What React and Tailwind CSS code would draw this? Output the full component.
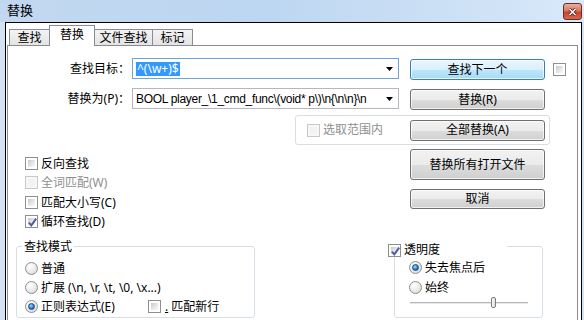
import React from "react";

function Check({ checked, disabled }) {
  return (
    <span
      className={`relative inline-flex w-[13px] h-[13px] shrink-0 border p-[2px] ${
        disabled ? "border-[#c8c8c8] bg-[#f7f7f7]" : "border-[#8e8f8f] bg-white"
      }`}
    >
      <span
        className={`block w-full h-full ${
          disabled
            ? "bg-[#f2f2f2]"
            : "bg-[linear-gradient(135deg,#c9c9c9_0%,#e6e6e6_55%,#f8f8f8_100%)]"
        }`}
      />
      {checked && (
        <svg className="absolute left-[1px] top-[1px]" width="11" height="11" viewBox="0 0 11 11">
          <path d="M1.8 5.6 L4.3 8.4 L9.2 1.6" stroke="#4a5d9c" strokeWidth="1.9" fill="none" />
        </svg>
      )}
    </span>
  );
}

function Radio({ checked }) {
  return (
    <span className="relative inline-flex w-[13px] h-[13px] shrink-0 rounded-full border border-[#8e8f8f] bg-[radial-gradient(circle_at_35%_30%,#ffffff_0%,#ececec_50%,#cfcfcf_100%)] items-center justify-center">
      {checked && (
        <span className="block w-[7px] h-[7px] rounded-full border border-[#1b4a78] bg-[radial-gradient(circle_at_40%_35%,#9fe0ff_0%,#2a8ad6_50%,#0e4a86_100%)]" />
      )}
    </span>
  );
}

function Btn({ children, className = "", primary }) {
  return (
    <div
      className={`flex items-center justify-center rounded-[3px] border text-[12px] leading-[14px] shadow-[inset_0_0_0_1px_rgba(255,255,255,0.7)] ${
        primary
          ? "border-[#3c7fb1] bg-[linear-gradient(to_bottom,#eaf6fd_0%,#d9f0fc_50%,#bee6fd_51%,#a7d9f5_100%)]"
          : "border-[#707070] bg-[linear-gradient(to_bottom,#f2f2f2_0%,#ebebeb_50%,#dddddd_51%,#cfcfcf_100%)]"
      } ${className}`}
    >
      {children}
    </div>
  );
}

function Arrow() {
  return (
    <svg width="7" height="4" viewBox="0 0 7 4" className="shrink-0">
      <path d="M0 0 H7 L3.5 4 Z" fill="#000" />
    </svg>
  );
}

function Tab({ children, selected, className = "" }) {
  if (selected) {
    return (
      <div
        className={`relative z-10 -ml-px mb-[-1px] h-[21px] bg-white border-l border-t border-r border-[#898c95] flex justify-center pt-[2px] leading-[14px] ${className}`}
      >
        {children}
      </div>
    );
  }
  return (
    <div
      className={`h-[16px] border-l border-t border-r border-[#898c95] bg-[linear-gradient(to_bottom,#f3f3f3,#e4e4e4)] flex items-center justify-center pt-[1px] leading-[14px] ${className}`}
    >
      {children}
    </div>
  );
}

export default function App() {
  return (
    <div className="w-[584px] h-[320px] overflow-hidden flex flex-col bg-[#d3e3f3] text-[12px] text-black font-['Noto_Sans','Noto_Sans_CJK_SC',sans-serif]">
      {/* title bar */}
      <div className="h-[22px] shrink-0 flex items-center justify-between pl-[7px] pr-[2px] bg-[linear-gradient(90deg,#c2d8f0_0%,#bdd6f1_45%,#c9def4_70%,#d8e9fa_100%)]">
        <span className="text-[13px] leading-[14px] -mt-[2px]">替换</span>
        <div className="w-[19px] h-[17px] mt-px flex items-center justify-center rounded-[3px] border border-[#6f2a22] bg-[linear-gradient(to_bottom,#eab0a2_0%,#d9775f_45%,#c6452c_55%,#d4684c_100%)]">
          <svg width="9" height="8" viewBox="0 0 9 8">
            <path d="M1.5 1 L7.5 7 M7.5 1 L1.5 7" stroke="#4a1a14" strokeWidth="3" />
            <path d="M1.5 1 L7.5 7 M7.5 1 L1.5 7" stroke="#ffffff" strokeWidth="1.5" />
          </svg>
        </div>
      </div>

      {/* frame */}
      <div className="flex-1 min-h-0 flex pl-[5px] pr-[2px]">
        <div className="flex-1 min-w-0 flex flex-col border-l border-t border-r border-black bg-white">
          {/* tabs */}
          <div className="h-[22px] shrink-0 flex items-end pl-[3px]">
            <Tab className="w-[41px]">查找</Tab>
            <Tab selected className="w-[46px]">替换</Tab>
            <Tab className="-ml-px w-[59px]">文件查找</Tab>
            <Tab className="-ml-px w-[41px]">标记</Tab>
          </div>

          {/* panel */}
          <div className="flex-1 min-h-0 ml-px mr-[3px] border-l border-t border-r border-[#898c95] flex flex-col">
            {/* row 1 */}
            <div className="flex items-start mt-[12px]">
              <div className="w-[124px] h-[21px] flex items-center justify-end pr-[2px] leading-[14px]">
                查找目标：
              </div>
              <div className="w-[267px] h-[21px] border border-[#6aa4dc] bg-white flex items-center pl-[3px] pr-[5px]">
                <span className="bg-[#3399ff] text-white leading-[14px] px-px whitespace-pre">^(\w+)$</span>
                <span className="flex-1" />
                <Arrow />
              </div>
              <Btn primary className="ml-[11px] mt-px w-[135px] h-[21px]">
                查找下一个
              </Btn>
              <span className="ml-[8px] mt-[5px] inline-flex">
                <Check />
              </span>
            </div>

            {/* row 2 */}
            <div className="flex items-start mt-[8px]">
              <div className="w-[124px] h-[21px] flex items-center justify-end pr-[2px] leading-[14px]">
                替换为(P)：
              </div>
              <div className="w-[267px] h-[21px] border border-[#b4b7bf] bg-white flex items-center pl-[3px] pr-[5px]">
                <span className="leading-[14px] whitespace-pre tracking-[-0.3px] font-['Liberation_Sans','Noto_Sans',sans-serif]">
                  {"BOOL player_\\1_cmd_func\\(void* p\\)\\n{\\n\\n}\\n"}
                </span>
                <span className="flex-1" />
                <Arrow />
              </div>
              <Btn className="ml-[11px] mt-px w-[135px] h-[21px]">替换(R)</Btn>
            </div>

            {/* row 3 : selection group */}
            <div className="flex mt-[5px]">
              <div className="ml-[287px] w-[255px] h-[30px] rounded-[3px] border border-[#d5dfe5] flex items-center pl-[11px]">
                <div className="w-[103px] flex items-center">
                  <Check disabled />
                  <span className="ml-[3px] leading-[14px] text-[#8f8f8f]">选取范围内</span>
                </div>
                <Btn className="w-[135px] h-[21px]">全部替换(A)</Btn>
              </div>
            </div>

            {/* section 4 */}
            <div className="flex h-[101px] shrink-0">
              <div className="w-[402px] pl-[17px] flex flex-col">
                <div className="mt-[12px] h-[13px] flex items-center">
                  <Check />
                  <span className="ml-[3px] leading-[14px]">反向查找</span>
                </div>
                <div className="mt-[6px] h-[13px] flex items-center">
                  <Check disabled />
                  <span className="ml-[3px] leading-[14px] text-[#8f8f8f]">全词匹配(W)</span>
                </div>
                <div className="mt-[7px] h-[13px] flex items-center">
                  <Check />
                  <span className="ml-[3px] leading-[14px]">匹配大小写(C)</span>
                </div>
                <div className="mt-[6px] h-[13px] flex items-center">
                  <Check checked />
                  <span className="ml-[3px] leading-[14px]">循环查找(D)</span>
                </div>
              </div>
              <div className="flex flex-col">
                <Btn className="mt-[4px] w-[135px] h-[31px]">替换所有打开文件</Btn>
                <Btn className="mt-[9px] w-[135px] h-[20px]">取消</Btn>
              </div>
            </div>

            {/* section 5 */}
            <div className="flex shrink-0">
              {/* search mode */}
              <div className="relative ml-[8px] w-[239px] h-[72px] rounded-[3px] border border-[#d5dfe5] flex flex-col pl-[8px] pt-[15px]">
                <span className="absolute left-[5px] top-[-7px] px-[2px] bg-white leading-[14px]">查找模式</span>
                <div className="h-[13px] flex items-center">
                  <Radio />
                  <span className="ml-[3px] leading-[14px]">普通</span>
                </div>
                <div className="mt-[6px] h-[13px] flex items-center">
                  <Radio />
                  <span className="ml-[3px] leading-[14px] whitespace-pre">扩展 (\n, \r, \t, \0, \x...)</span>
                </div>
                <div className="mt-[6px] h-[13px] flex items-center">
                  <div className="w-[123px] flex items-center">
                    <Radio checked />
                    <span className="ml-[3px] leading-[14px]">正则表达式(E)</span>
                  </div>
                  <Check />
                  <span className="ml-[4px] leading-[14px]">
                    <span className="underline">.</span> 匹配新行
                  </span>
                </div>
              </div>

              {/* transparency */}
              <div className="relative ml-[139px] w-[149px] h-[72px] rounded-[3px] border border-[#d5dfe5] flex flex-col pl-[14px] pt-[14px]">
                <div className="absolute left-[-7px] top-[-4px] w-[119px] h-[14px] bg-white flex items-center">
                  <Check checked />
                  <span className="ml-[3px] leading-[14px]">透明度</span>
                </div>
                <div className="h-[13px] flex items-center">
                  <Radio checked />
                  <span className="ml-[3px] leading-[14px]">失去焦点后</span>
                </div>
                <div className="mt-[7px] h-[13px] flex items-center">
                  <Radio />
                  <span className="ml-[3px] leading-[14px]">始终</span>
                </div>
                <div className="relative ml-px mt-[3px] w-[118px] h-[11px]">
                  <div className="absolute left-0 right-0 top-[5px] h-[2px] border-t border-[#b9b9b9] bg-[#e6e6e6]" />
                  <div className="absolute left-[81px] top-0 w-[5px] h-[11px] rounded-[2px] border border-[#7d7d7d] bg-[linear-gradient(to_right,#fafafa,#dedede)]" />
                </div>
              </div>
            </div>
          </div>
        </div>
      </div>
    </div>
  );
}
